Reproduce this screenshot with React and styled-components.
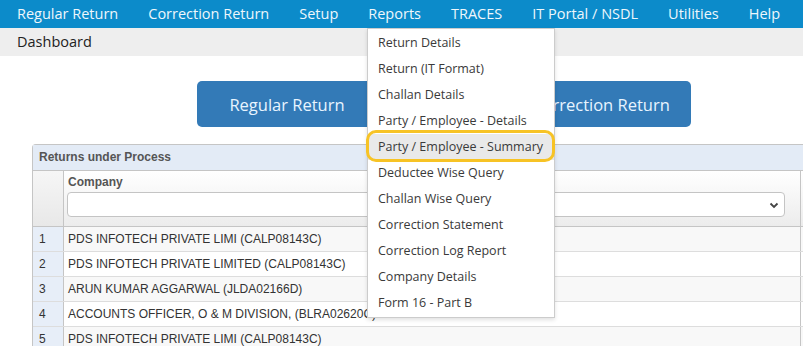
import React from 'react';
import styled, { createGlobalStyle } from 'styled-components';

const GlobalStyle = createGlobalStyle`
    html, body {
        margin: 0;
        padding: 0;
        background: #ffffff;
        overflow: hidden;
    }
    * { box-sizing: border-box; }
`

const Page = styled.div`
    position: relative;
    width: 803px;
    height: 346px;
    overflow: hidden;
    font-family: "Open Sans", "Noto Sans", sans-serif;
`

const NavBar = styled.div`
    display: flex;
    align-items: center;
    height: 28px;
    padding-left: 2px;
    background: #0c8bca;
`

const NavItem = styled.div`
    padding: 0 15px;
    color: #eef7fc;
    font-size: 14.5px;
    line-height: 28px;
    white-space: nowrap;
`

const SubBar = styled.div`
    height: 28px;
    padding-left: 17px;
    background: #eeeeee;
    color: #222;
    font-size: 14.5px;
    line-height: 28px;
`

const ButtonRow = styled.div`
    display: flex;
    gap: 134px;
    padding: 25px 0 0 197px;
`

const BigButton = styled.div`
    width: 180px;
    height: 46px;
    border-radius: 5px;
    background: #337ab7;
    color: #e8f4ff;
    font-size: 16.5px;
    display: flex;
    align-items: center;
    justify-content: center;
`

const Panel = styled.div`
    margin: 17px 0 0 32px;
    width: 800px;
    border: 1px solid #c5c5c5;
    border-right: none;
    border-radius: 4px 0 0 0;
    font-family: "Liberation Sans", Arial, sans-serif;
    color: #333;
`

const Caption = styled.div`
    height: 26px;
    padding-left: 6px;
    background: #e3ebf6;
    border-bottom: 1px solid #c5c5c5;
    color: #555;
    font-size: 12px;
    font-weight: bold;
    line-height: 25px;
`

const Row = styled.div`
    display: grid;
    grid-template-columns: 31px 737px;
    height: ${p => p.$h}px;
    border-bottom: 1px solid #dddddd;
    background: ${p => p.$alt ? '#f8f8f8' : '#ffffff'};
`

const HeadRow = styled(Row)`
    background: linear-gradient(#ffffff, #ececec);
    border-bottom-color: #c5c5c5;
`

const NumCell = styled.div`
    border-right: 1px solid #c5c5c5;
    background: ${p => p.$head ? 'linear-gradient(#f6f6f6, #e8e8e8)' : '#e7eef8'};
    padding-left: 6px;
    font-size: 12px;
    line-height: 24px;
`

const DataCell = styled.div`
    border-right: 1px solid #c5c5c5;
    padding-left: 4px;
    font-size: 12px;
    line-height: 24px;
    white-space: nowrap;
    overflow: hidden;
`

const HeadCell = styled.div`
    border-right: 1px solid #c5c5c5;
    padding: 4px 0 0 3px;
`

const HeadLabel = styled.div`
    padding-left: 1px;
    font-size: 12px;
    font-weight: bold;
    color: #555;
    height: 17px;
`

const Select = styled.div`
    width: 718px;
    height: 25px;
    border: 1px solid #c4c4c4;
    border-radius: 4px;
    background: #fff;
    display: flex;
    align-items: center;
    justify-content: flex-end;
    padding-right: 4px;
`

const Menu = styled.div`
    position: absolute;
    left: 367px;
    top: 28px;
    width: 188px;
    padding: 1px 0;
    background: #fff;
    border: 1px solid #cccccc;
    box-shadow: 0 2px 4px rgba(0,0,0,0.12);
`

const MenuItem = styled.div`
    position: relative;
    height: 26px;
    padding-left: 10px;
    font-size: 12.5px;
    line-height: 26px;
    color: #3a3a3a;
    white-space: nowrap;
    background: ${p => p.$active ? '#e9e9e9' : 'transparent'};
    ${p => p.$active && `
        &::after {
            content: '';
            position: absolute;
            left: -2px;
            right: -1px;
            top: -4px;
            bottom: -2px;
            border: 3px solid #f7c325;
            border-radius: 10px;
        }
    `}
`

const navItems = ['Regular Return', 'Correction Return', 'Setup', 'Reports', 'TRACES', 'IT Portal / NSDL', 'Utilities', 'Help']

const menuItems = [
    'Return Details',
    'Return (IT Format)',
    'Challan Details',
    'Party / Employee - Details',
    'Party / Employee - Summary',
    'Deductee Wise Query',
    'Challan Wise Query',
    'Correction Statement',
    'Correction Log Report',
    'Company Details',
    'Form 16 - Part B',
]

const companies = [
    'PDS INFOTECH PRIVATE LIMI (CALP08143C)',
    'PDS INFOTECH PRIVATE LIMITED (CALP08143C)',
    'ARUN KUMAR AGGARWAL (JLDA02166D)',
    'ACCOUNTS OFFICER, O & M DIVISION, (BLRA02620C)',
    'PDS INFOTECH PRIVATE LIMI (CALP08143C)',
]

const App = () => {
    return (
        <Page>
            <GlobalStyle />
            <NavBar>
                {navItems.map(n => <NavItem key={n}>{n}</NavItem>)}
            </NavBar>
            <SubBar>Dashboard</SubBar>
            <ButtonRow>
                <BigButton>Regular Return</BigButton>
                <BigButton>Correction Return</BigButton>
            </ButtonRow>
            <Panel>
                <Caption>Returns under Process</Caption>
                <HeadRow $h={56}>
                    <NumCell $head />
                    <HeadCell>
                        <HeadLabel>Company</HeadLabel>
                        <Select>
                            <svg width="12" height="12" viewBox="0 0 12 12">
                                <path d="M2.5 4.5 L6 8 L9.5 4.5" fill="none" stroke="#444" strokeWidth="1.8" />
                            </svg>
                        </Select>
                    </HeadCell>
                </HeadRow>
                {companies.map((c, i) => (
                    <Row key={i} $h={25} $alt={i % 2 === 0}>
                        <NumCell>{i + 1}</NumCell>
                        <DataCell>{c}</DataCell>
                    </Row>
                ))}
            </Panel>
            <Menu>
                {menuItems.map(m => (
                    <MenuItem key={m} $active={m === 'Party / Employee - Summary'}>{m}</MenuItem>
                ))}
            </Menu>
        </Page>
    )
}

export default App
